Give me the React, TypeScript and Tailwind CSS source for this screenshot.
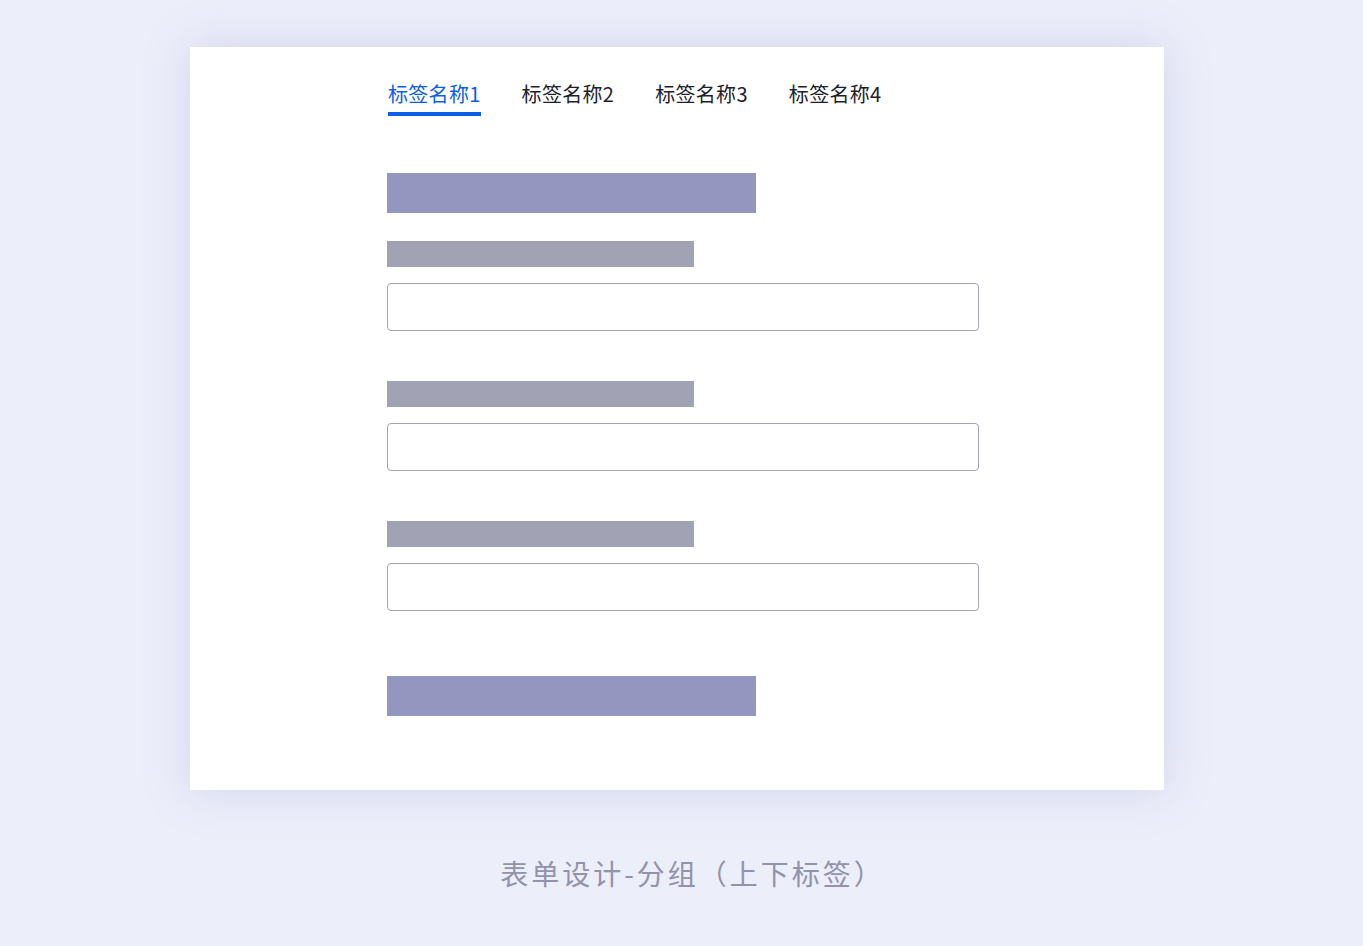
import React from 'react';

const tabs = ['标签名称1', '标签名称2', '标签名称3', '标签名称4'];

const Field: React.FC<{ first?: boolean }> = ({ first }) => (
  <div className={first ? 'mt-[28px]' : 'mt-[50px]'}>
    <div className="h-[26px] w-[307px] bg-[#a2a2b5]" />
    <div className="mt-4 h-[48px] w-[592px] rounded-[4px] border border-[#a4a3b9] bg-white" />
  </div>
);

const App: React.FC = () => {
  return (
    <div
      className="min-h-[946px] w-full bg-[#eceefa] pt-[47px]"
      style={{ fontFamily: '"Noto Sans CJK SC", "Noto Sans", sans-serif' }}
    >
      {/* form card */}
      <div className="ml-[190px] w-[974px] bg-white pl-[198px] pt-[33px] pb-[74px] shadow-[0_0_40px_rgba(160,165,215,0.35)]">
        <div className="flex gap-[41px]">
          {tabs.map((t, i) => (
            <div key={t} className="flex flex-col">
              <span className={`text-[20px] leading-[28px] tracking-[0.3px] ${i === 0 ? 'text-[#0b5ee8]' : 'text-[#1e1e2c]'}`}>{t}</span>
              <span className={`mt-[4px] h-[4px] ${i === 0 ? 'bg-[#0b5ee8]' : 'bg-transparent'}`} />
            </div>
          ))}
        </div>

        <div className="-ml-px mt-[57px] h-[40px] w-[369px] bg-[#9496c0]" />
        <div className="-ml-px">
          <Field first />
          <Field />
          <Field />
        </div>
        <div className="-ml-px mt-[65px] h-[40px] w-[369px] bg-[#9496c0]" />
      </div>

      <p className="mt-[63px] pl-[22px] text-center text-[28px] leading-[40px] tracking-[3px] text-[#9293ab]">
        表单设计-分组（上下标签）
      </p>
    </div>
  );
};

export default App;
